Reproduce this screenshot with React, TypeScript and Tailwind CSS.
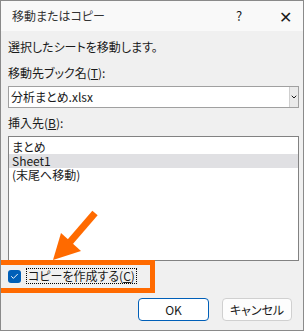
import { ChevronDown, Check } from "lucide-react";

const font = "font-['Yu_Gothic_UI','Noto_Sans_CJK_JP',sans-serif] [font-feature-settings:'palt']";

/* ─── Overlay: orange callout arrow ─── */
function CalloutArrow() {
  return (
    <svg className="absolute left-0 top-0 pointer-events-none" width="304" height="331">
      <line x1="94" y1="212" x2="69" y2="241" stroke="#ff6a00" strokeWidth="7" />
      <polygon points="52,259 60,232 80,250" fill="#ff6a00" />
    </svg>
  );
}

export default function App() {
  return (
    <div className={`relative w-[304px] h-[331px] bg-[#f0f0f0] border border-[#8a8a8a] text-[12px] text-[#1a1a1a] overflow-hidden ${font}`}>
      {/* title bar */}
      <div className="h-[30px] bg-[#f9f9f9] flex items-center pl-[11px] pr-[8px]">
        <span className="flex-1 text-[#333]">移動またはコピー</span>
        <span className="w-[20px] text-center text-[13px]">?</span>
        <span className="w-[26px]" />
        <span className="w-[20px] text-center text-[16px] font-light">✕</span>
      </div>

      <div className="px-[7px] pt-[8px]">
        <div className="leading-[16px]">選択したシートを移動します。</div>

        <div className="mt-[10px] leading-[16px]">
          移動先ブック名(<span className="underline">T</span>):
        </div>
        <div className="mt-[5px] h-[22px] w-[291px] bg-white border border-[#a0a0a0] flex items-center">
          <span className="flex-1 pl-[2px]">分析まとめ.xlsx</span>
          <span className="w-[9px] h-full bg-[#eaeaea] border-l border-[#cfcfcf] flex items-center justify-center">
            <ChevronDown size={8} strokeWidth={3} />
          </span>
        </div>

        <div className="mt-[7px] leading-[16px]">
          挿入先(<span className="underline">B</span>):
        </div>
        <div className="mt-[5px] h-[125px] w-[291px] bg-white border border-[#828282] pt-[3px]">
          <div className="h-[14px] flex items-center pl-[3px]">まとめ</div>
          <div className="h-[14px] flex items-center pl-[3px] bg-[#e0e0e3]">Sheet1</div>
          <div className="h-[14px] flex items-center pl-[3px]">(末尾へ移動)</div>
        </div>

        {/* copy checkbox */}
        <div className="mt-[7px] flex items-center gap-[5px] h-[16px]">
          <span className="w-[13px] h-[13px] rounded-[3px] bg-[#005fb8] flex items-center justify-center">
            <Check size={9} strokeWidth={2.5} className="text-white" />
          </span>
          <span className="border border-dotted border-black px-[1px] leading-[14px]">
            コピーを作成する(<span className="underline">C</span>)
          </span>
        </div>

        {/* buttons */}
        <div className="mt-[14px] flex justify-end gap-[13px] pr-[4px]">
          <button className="w-[71px] h-[23px] rounded-[4px] bg-white border border-[#005fb8] text-[12px]">OK</button>
          <button className="w-[70px] h-[23px] rounded-[4px] bg-[#fdfdfd] border border-[#d0d0d0] text-[12px]">キャンセル</button>
        </div>
      </div>

      {/* orange highlight box */}
      <div className="absolute left-[-6px] top-[259px] w-[160px] h-[33px] border-[5px] border-[#ff6a00] pointer-events-none" />
      <CalloutArrow />
    </div>
  );
}
